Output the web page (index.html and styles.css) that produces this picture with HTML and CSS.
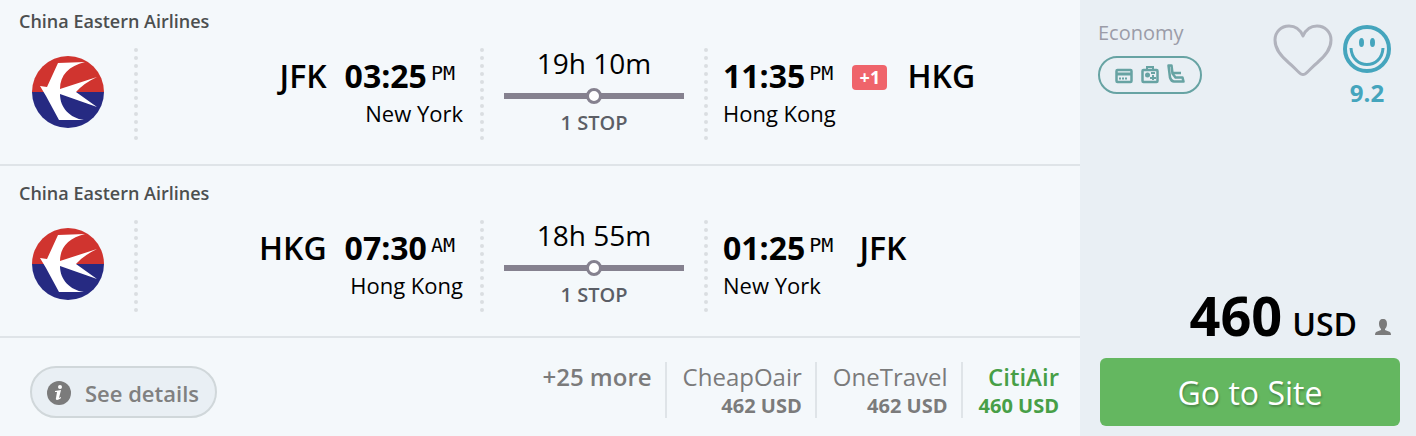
FILE: index.html
```html
<!doctype html>
<html lang="en">
<head>
	<meta charset="UTF-8">
	<title>JFK - HKG</title>
	<link rel="stylesheet" href="styles.css">
</head>
<body>
	<svg class="sprite" width="0" height="0" aria-hidden="true">
		<symbol id="logo" viewBox="0 0 74 74">
			<path d="M1 37a36 36 0 0 1 72 0z" fill="#d0342f"/>
			<path d="M1 37a36 36 0 0 0 72 0z" fill="#262a82"/>
			<path d="M9 31l7 1 11-24 27-1C38 11 29 20 29 34L66 22Q53 28 45 37L66 52 29 39c0 14 10 24 24 26H28L15 41z" fill="#fff"/>
		</symbol>
	</svg>
	<div class="result">
		<div class="main">
			<div class="leg leg-first">
				<div class="airline">China Eastern Airlines</div>
				<div class="leg-body">
					<div class="col col-logo"><svg class="logo"><use href="#logo"/></svg></div>
					<div class="col col-from">
						<div class="time-row"><span class="code">JFK</span><b class="time">03:25</b><span class="ampm">PM</span></div>
						<div class="city">New York</div>
					</div>
					<div class="col col-stops">
						<div class="duration">19h 10m</div>
						<div class="track"><i class="dot"></i></div>
						<div class="stops">1 STOP</div>
					</div>
					<div class="col-to">
						<div class="time-row"><b class="time">11:35</b><span class="ampm">PM</span><span class="plus">+1</span><span class="code">HKG</span></div>
						<div class="city">Hong Kong</div>
					</div>
				</div>
			</div>
			<div class="leg">
				<div class="airline">China Eastern Airlines</div>
				<div class="leg-body">
					<div class="col col-logo"><svg class="logo"><use href="#logo"/></svg></div>
					<div class="col col-from">
						<div class="time-row"><span class="code">HKG</span><b class="time">07:30</b><span class="ampm">AM</span></div>
						<div class="city">Hong Kong</div>
					</div>
					<div class="col col-stops">
						<div class="duration">18h 55m</div>
						<div class="track"><i class="dot"></i></div>
						<div class="stops">1 STOP</div>
					</div>
					<div class="col-to">
						<div class="time-row"><b class="time">01:25</b><span class="ampm">PM</span><span class="code">JFK</span></div>
						<div class="city">New York</div>
					</div>
				</div>
			</div>
			<div class="footer">
				<button type="button" class="details">
					<svg width="24" height="24" viewBox="0 0 24 24">
						<circle cx="12" cy="12" r="12" fill="#7b7b7b"/>
						<circle cx="13" cy="6" r="2" fill="#fff"/>
						<path d="M8 10l6-1-2 8 2-1v1c-2 2-6 3-5 0l1-6-2 0z" fill="#fff"/>
					</svg>
					See details
				</button>
				<div class="providers">
					<a href="#" class="provider more">+25 more</a>
					<a href="#" class="provider">CheapOair<b>462 USD</b></a>
					<a href="#" class="provider">OneTravel<b>462 USD</b></a>
					<a href="#" class="provider best">CitiAir<b>460 USD</b></a>
				</div>
			</div>
		</div>
		<div class="side">
			<div class="side-top">
				<div class="cabin">
					<div class="cabin-name">Economy</div>
					<button type="button" class="amenities" aria-label="Fees and amenities">
						<svg width="18" height="20" viewBox="0 0 18 20" fill="none" stroke="currentColor" stroke-width="2.500">
							<rect x="1.500" y="6" width="15" height="12" rx="1"/>
							<path d="M1 10h16" stroke-width="3"/>
							<path d="M4 14.500h8" stroke-width="2" stroke-dasharray="2 1"/>
						</svg>
						<svg width="18" height="20" viewBox="0 0 18 20" fill="none" stroke="currentColor" stroke-width="2.500">
							<rect x="1.500" y="6" width="15" height="12" rx="1"/>
							<path d="M6 6V3h6v3" stroke-width="2"/>
							<circle cx="6.500" cy="11" r="2.500" fill="currentColor" stroke="none"/>
							<path d="M9 14h6M12 11v5M10 9h4" stroke-width="2"/>
						</svg>
						<svg width="18" height="20" viewBox="0 0 18 20" fill="none" stroke="currentColor" stroke-width="2.500" stroke-linejoin="round">
							<path d="M1.500 1.500h3l1 8 3 4h7l1 4H7c-2 0-3-1-4-4z"/>
							<path d="M6 9h8"/>
						</svg>
					</button>
				</div>
				<button type="button" class="heart" aria-label="Save">
					<svg width="60" height="54" viewBox="0 0 60 54" fill="none" stroke="#b1b3bd" stroke-width="3" stroke-linejoin="round">
						<path d="M30 13C27 6 22 3 16 3 8 3 2 9 2 17c0 10 7 17 14 23 5 4 9 9 12 11q2 1 4 0c3-2 7-7 12-11 7-6 14-13 14-23 0-8-6-14-14-14-6 0-11 3-14 10z"/>
					</svg>
				</button>
				<div class="score">
					<svg width="48" height="48" viewBox="0 0 48 48" fill="none" stroke="#45a5bd" stroke-width="4">
						<circle cx="24" cy="24" r="22"/>
						<path d="M8 23c1 22 31 22 32 0" stroke-width="3"/>
						<ellipse cx="18.500" cy="17.500" rx="2.500" ry="4.500" fill="#45a5bd" stroke="none"/>
						<ellipse cx="29.500" cy="17.500" rx="2.500" ry="4.500" fill="#45a5bd" stroke="none"/>
					</svg>
					<b>9.2</b>
				</div>
			</div>
			<div class="price">
				<b>460</b>
				<span>USD</span>
				<svg width="16" height="18" viewBox="0 0 16 18" fill="#7b7b7b">
					<path d="M8 1c3 0 4 2 4 5 0 2-1 4-2 5v1l5 2q1 1 1 3H0q0-2 1-3l5-2v-1C5 10 4 8 4 6c0-3 1-5 4-5z"/>
				</svg>
			</div>
			<button type="button" class="go">Go to Site</button>
		</div>
	</div>
</body>
</html>
```
FILE: styles.css
```css
*{
	box-sizing: border-box;
}
body{
	margin: 0;
	font-family: "Open Sans","Noto Sans",sans-serif;
	color: #000;
	background: #f4f8fb;
}
button{
	font-family: inherit;
	padding: 0;
	border: 0;
	background: none;
	cursor: pointer;
}
a{
	text-decoration: none;
}
svg{
	display: block;
}
.sprite{
	position: absolute;
}
.result{
	display: flex;
	min-height: 100vh;
}
.main{
	flex: 1;
}

/* flight legs */
.leg{
	padding: 15px 0 24px;
	border-bottom: 2px solid #dfe4e8;
}
.leg-first{
	padding-top: 9px;
}
.airline{
	padding-left: 19px;
	margin-bottom: 15px;
	line-height: 24px;
	font-size: 18px;
	font-weight: 600;
	color: #4c4f50;
}
.leg-body{
	display: grid;
	grid-template-columns: 138px 1fr 224px 372px;
	height: 92px;
}
.col{
	border-right: 4px dotted #dadee1;
}
.col-logo{
	display: flex;
	align-items: center;
	padding-left: 31px;
}
.logo{
	width: 74px;
	height: 74px;
	margin-bottom: 4px;
}
.time-row{
	display: flex;
	align-items: flex-start;
	padding-top: 8px;
	line-height: 40px;
	font-size: 32px;
}
.code{
	font-weight: 600;
}
.ampm{
	margin-left: 4px;
	line-height: 34px;
	font-family: "DejaVu Sans Mono",monospace;
	font-size: 20px;
}
.city{
	line-height: 34px;
	font-size: 22px;
}
.col-from{
	padding-right: 17px;
	text-align: right;
}
.col-from .time-row{
	justify-content: flex-end;
	padding-right: 8px;
}
.col-from .time{
	margin-left: 18px;
}
.col-to{
	padding-left: 15px;
}
.col-to .ampm + .code{
	margin-left: 26px;
}
.plus{
	width: 35px;
	height: 25px;
	margin: 9px 20px 0 19px;
	border-radius: 4px;
	line-height: 25px;
	font-size: 18px;
	font-weight: 700;
	text-align: center;
	color: #fff;
	background: #ef646b;
}
.col-stops{
	padding: 0 20px;
	text-align: center;
}
.duration{
	line-height: 30px;
	font-size: 28px;
}
.track{
	display: flex;
	align-items: center;
	justify-content: center;
	height: 6px;
	margin: 15px 0 11px;
	background: #85818f;
}
.dot{
	width: 16px;
	height: 16px;
	border: 3px solid #85818f;
	border-radius: 50%;
	background: #fff;
}
.stops{
	line-height: 26px;
	font-size: 20px;
	font-weight: 600;
	color: #5b5e66;
}

/* providers */
.footer{
	display: flex;
	align-items: flex-end;
	justify-content: space-between;
	padding: 24px 8px 18px 30px;
}
.details{
	display: flex;
	align-items: center;
	gap: 14px;
	height: 52px;
	padding: 2px 16px 0 15px;
	border: 2px solid #d0d7da;
	border-radius: 26px;
	font-size: 22px;
	font-weight: 600;
	color: #808080;
	background: #e9eff4;
}
.providers{
	display: flex;
}
.provider{
	height: 56px;
	padding: 0 13px 0 16px;
	line-height: 30px;
	font-size: 24px;
	text-align: right;
	color: #7b7b7b;
}
.provider + .provider{
	border-left: 2px solid #dfe4e8;
}
.provider b{
	display: block;
	line-height: 28px;
	font-size: 20px;
	font-weight: 700;
}
.more,.best{
	font-weight: 600;
}
.best{
	color: #479f47;
}

/* price column */
.side{
	display: flex;
	flex-direction: column;
	width: 336px;
	padding: 20px 16px 10px 18px;
	background: #e9eff4;
}
.side-top{
	display: flex;
	align-items: flex-start;
	padding-right: 9px;
}
.cabin{
	flex: 1;
}
.cabin-name{
	line-height: 26px;
	font-size: 20px;
	color: #9b9ca8;
}
.amenities{
	display: flex;
	gap: 8px;
	width: 104px;
	height: 38px;
	margin-top: 10px;
	padding: 6px 15px;
	border: 2px solid #67a3a3;
	border-radius: 19px;
	color: #67a3a3;
}
.heart{
	margin: 3px 10px 0 0;
}
.score{
	padding-top: 5px;
	text-align: center;
	color: #45a5bd;
}
.score b{
	display: block;
	line-height: 40px;
	font-size: 24px;
}
.price{
	display: flex;
	align-items: baseline;
	justify-content: flex-end;
	margin-top: auto;
	padding-right: 9px;
	line-height: 64px;
}
.price b{
	font-size: 54px;
}
.price span{
	margin: 0 18px 0 10px;
	font-size: 32px;
	font-weight: 600;
}
.go{
	height: 68px;
	margin: 2px 0 0 2px;
	border-radius: 6px;
	font-size: 32px;
	font-weight: 500;
	text-shadow: 1px 2px 2px rgba(0,0,0,.25);
	color: #fff;
	background: #64b760;
}
```
